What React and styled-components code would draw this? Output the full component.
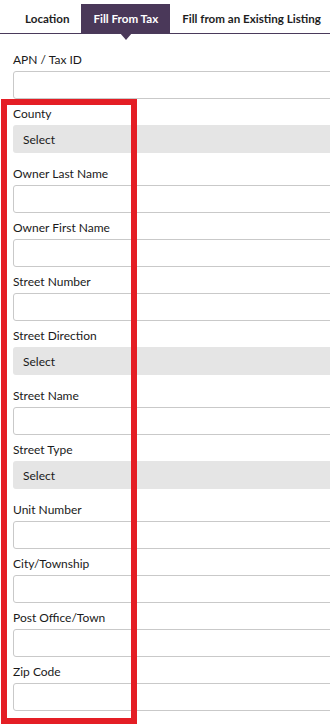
import React from "react";
import styled, { createGlobalStyle } from "styled-components";

const Global = createGlobalStyle`
  html, body { margin: 0; padding: 0; background: #fff; overflow: hidden; }
  body { font-family: "Lato", "Liberation Sans", sans-serif; color: #222; }
  * { box-sizing: border-box; }
`;

const Page = styled.div`
  position: relative;
  width: 330px;
  height: 724px;
  overflow: hidden;
`;

const TabBar = styled.div`
  display: flex;
  margin-top: 4px;
  padding-left: 13px;
  height: 30px;
  border-bottom: 1px solid #4a3a5b;
`;

const Tab = styled.div`
  position: relative;
  display: flex;
  align-items: center;
  padding: 0 12px;
  height: 29px;
  white-space: nowrap;
  font-size: 11.6px;
  font-weight: 700;
  color: ${(p) => (p.$active ? "#fff" : "#1e1e1e")};
  background: ${(p) => (p.$active ? "#4a3859" : "transparent")};
  &::after {
    content: "";
    display: ${(p) => (p.$active ? "block" : "none")};
    position: absolute;
    left: 50%;
    top: 29px;
    margin-left: -6px;
    border-left: 6px solid transparent;
    border-right: 6px solid transparent;
    border-top: 7px solid #4a3859;
  }
`;

const Form = styled.div`
  display: flex;
  flex-direction: column;
  padding: 18px 0 0 13px;
`;

const Field = styled.div`
  display: flex;
  flex-direction: column;
  margin-bottom: ${(p) => (p.$select ? "13px" : "7px")};
`;

const Label = styled.label`
  font-size: 12px;
  line-height: 16px;
  margin-bottom: 3px;
  color: #1a1a1a;
`;

const Input = styled.input`
  width: 340px;
  height: 28px;
  border: 1px solid #c9c9c9;
  border-radius: 3px;
  background: #fff;
  font: inherit;
  padding: 0 9px;
`;

const SelectBox = styled.div`
  width: 340px;
  height: 28px;
  border-radius: 3px;
  background: #e5e5e5;
  display: flex;
  align-items: center;
  padding-left: 10px;
  font-size: 12px;
  color: #1a1a1a;
`;

const Highlight = styled.div`
  position: absolute;
  left: 1px;
  top: 99px;
  width: 136px;
  height: 625px;
  border: 6px solid #e41e25;
  pointer-events: none;
`;

const fields = [
  ["APN / Tax ID", false],
  ["County", true],
  ["Owner Last Name", false],
  ["Owner First Name", false],
  ["Street Number", false],
  ["Street Direction", true],
  ["Street Name", false],
  ["Street Type", true],
  ["Unit Number", false],
  ["City/Township", false],
  ["Post Office/Town", false],
  ["Zip Code", false],
];

export default function App() {
  return (
    <Page>
      <Global />
      <TabBar>
        <Tab>Location</Tab>
        <Tab $active>Fill From Tax</Tab>
        <Tab>Fill from an Existing Listing</Tab>
      </TabBar>
      <Form>
        {fields.map(([label, isSelect]) => (
          <Field key={label} $select={isSelect}>
            <Label>{label}</Label>
            {isSelect ? <SelectBox>Select</SelectBox> : <Input type="text" />}
          </Field>
        ))}
      </Form>
      <Highlight />
    </Page>
  );
}
